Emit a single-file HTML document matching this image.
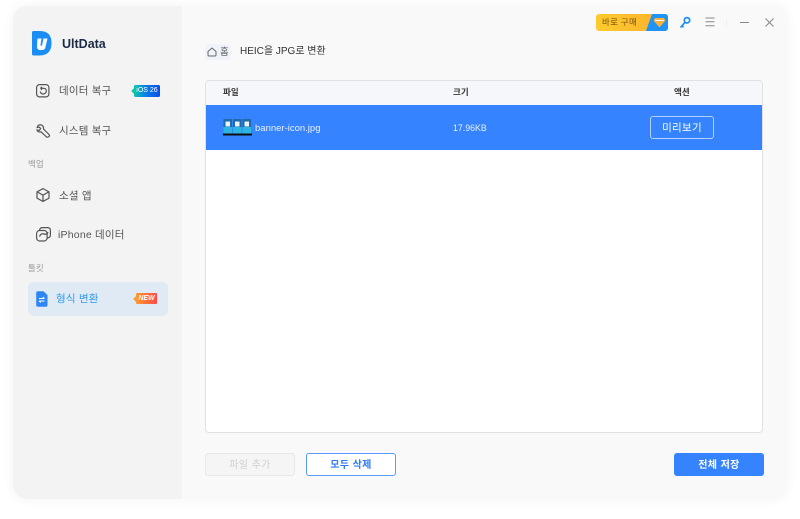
<!DOCTYPE html>
<html lang="ko"><head><meta charset="utf-8"><style>
html,body{margin:0;padding:0;width:800px;height:519px;overflow:hidden;background:#fff}
*{box-sizing:border-box}
body{font-family:"Liberation Sans","Noto Sans CJK KR",sans-serif;position:relative}
#w{position:absolute;left:0;top:0;width:800px;height:519px;filter:blur(.3px)}
.a{position:absolute;white-space:nowrap;line-height:1}
svg{position:absolute;overflow:visible}
</style></head><body><div id="w">
<div class="a" style="left:13px;top:6px;width:774px;height:493px;border-radius:14px;background:#f9f9f9;box-shadow:0 0 12px rgba(0,0,0,.05);overflow:hidden">
<div class="a" style="left:0;top:0;width:169px;height:493px;background:#f3f3f3"></div>
</div>

<!-- logo -->
<svg style="left:32px;top:31px" width="20" height="25" viewBox="0 0 20 25"><path d="M0 1.500Q0 0 1.500 0H8Q19.500 0 19.500 12T8 24.500H1.500Q0 24.500 0 23Z" fill="#1b8ef5"/><path d="M5.500 7.500H9.500L8.500 14Q8.500 15.500 10 14.500L11.500 7.500H15.500L13.500 16Q13 19 10 19H8Q4.800 19 5 15Z" fill="#fff"/></svg>
<div class="a" style="left:62px;top:38px;font-size:12.500px;font-weight:700;color:#1c2b45">UltData</div>

<!-- nav -->
<svg style="left:36px;top:84px" width="14" height="14" viewBox="0 0 14 14" fill="none" stroke="#555" stroke-width="1.200"><rect x=".6" y=".6" width="12.300" height="12.300" rx="3"/><path d="M4.500 4.300H8Q10.300 4.500 10.300 7T7.500 10Q4.700 10 4.300 7.500M4.500 4.300L6 2.800M4.500 4.300L6 5.800"/></svg>
<div class="a" style="left:59px;top:86px;font-size:10.500px;color:#555;letter-spacing:.2px">데이터 복구</div>
<div class="a" style="left:134px;top:85px;width:26px;height:12px;background:linear-gradient(90deg,#0cc7a8 0,#0b7de8 45%,#0a4fe8);border-radius:1.500px;color:#fff;font-size:7px;line-height:12px;text-align:center">iOS 26</div>
<div class="a" style="left:132px;top:89px;width:4px;height:4px;background:#0cc7a8;transform:rotate(45deg)"></div>

<svg style="left:36px;top:124px" width="14" height="14" viewBox="0 0 14 14" fill="none" stroke="#555" stroke-width="1.200"><path d="M5 .8Q2 .5 1.200 3.500L3.500 3.200L4.600 4.500L3.600 6.200L1 6Q2 8.500 5 7.800L10.500 13Q12 13.500 13 12.500T13 10.500L7.500 5Q8 2 5 .8Z"/></svg>
<div class="a" style="left:59px;top:126px;font-size:10.500px;color:#555;letter-spacing:.2px">시스템 복구</div>

<div class="a" style="left:28px;top:160px;font-size:8.500px;color:#9a9a9a">백업</div>

<svg style="left:36px;top:188px" width="14" height="14" viewBox="0 0 14 14" fill="none" stroke="#555" stroke-width="1.200"><path d="M7 .6L13 3.800V10.200L7 13.400L1 10.200V3.800ZM1.200 3.900L7 7.200L12.800 3.900M7 7.200V13.200"/></svg>
<div class="a" style="left:59px;top:191px;font-size:10.500px;color:#555;letter-spacing:.2px">소셜 앱</div>

<svg style="left:36px;top:227px" width="15" height="15" viewBox="0 0 15 15" fill="none" stroke="#555" stroke-width="1.200"><rect x=".6" y="3.500" width="10.500" height="10.500" rx="3"/><path d="M3.500 3Q4 .6 6.500 .6H11.500Q14.400 .6 14.400 3.500V8Q14.400 10.500 11.500 11"/><path d="M3.500 9.500Q5 6 8 7T12 5"/></svg>
<div class="a" style="left:58px;top:230px;font-size:10.500px;color:#555;letter-spacing:.2px">iPhone 데이터</div>

<div class="a" style="left:28px;top:264px;font-size:8.500px;color:#9a9a9a">툴킷</div>

<div class="a" style="left:28px;top:282px;width:140px;height:34px;background:#dfeaf4;border-radius:6px"></div>
<svg style="left:36px;top:291px" width="12" height="16" viewBox="0 0 12 16"><path d="M2 .2H7.500L11.500 4V14Q11.500 15.800 9.700 15.800H2Q.2 15.800.2 14V2Q.2 .2 2 .2Z" fill="#2e86f5"/><path d="M3 7.500H8.500M6.800 6L8.500 7.500M3 10H8.500M3 10L4.800 11.500" stroke="#fff" stroke-width="1" fill="none"/></svg>
<div class="a" style="left:56px;top:294px;font-size:10.500px;color:#2e9bf0;letter-spacing:.2px">형식 변환</div>
<div class="a" style="left:136px;top:293px;width:21px;height:11px;background:linear-gradient(90deg,#ff9a2e,#ff4a4a);border-radius:1px;color:#fff;font-size:7px;font-weight:700;font-style:italic;line-height:11px;text-align:center">NEW</div>
<div class="a" style="left:134px;top:297px;width:4px;height:4px;background:#ff9a2e;transform:rotate(45deg)"></div>

<!-- top bar -->
<div class="a" style="left:596px;top:14px;width:72px;height:17px;border-radius:3px;background:linear-gradient(90deg,#ffcb2e,#fdb02f);overflow:hidden">
<div class="a" style="left:6px;top:4px;font-size:8.500px;color:#7a5510;letter-spacing:.3px">바로 구매</div>
<div class="a" style="left:53px;top:0;width:24px;height:17px;background:#1f94f5;transform:skewX(-20deg)"></div>
</div>
<svg style="left:653px;top:17px" width="13" height="11" viewBox="0 0 13 11"><path d="M2 1H11L12.500 3.500L6.500 10.500L.5 3.500Z" fill="#f7b13c"/><path d="M2 3.500H11" stroke="#fff" stroke-width="1"/></svg>

<svg style="left:679px;top:16px" width="12" height="13" viewBox="0 0 12 13" fill="none" stroke="#1b8ef5" stroke-width="1.700"><circle cx="8" cy="4.300" r="2.700"/><path d="M6 6.300L1.500 11.500M3 9.800L4.500 11.200"/></svg>
<svg style="left:705px;top:17px" width="10" height="10" viewBox="0 0 10 10" stroke="#888" stroke-width="1"><path d="M.5 1H9.500M.5 4.800H9.500M.5 8.800H9.500"/></svg>
<div class="a" style="left:726px;top:19px;width:1px;height:8px;background:#eee"></div>
<div class="a" style="left:740px;top:22px;width:9px;height:1px;background:#888"></div>
<svg style="left:765px;top:18px" width="9" height="9" viewBox="0 0 9 9" stroke="#888" stroke-width="1"><path d="M.5 .5L8.500 8.500M8.500 .5L.5 8.500"/></svg>

<!-- breadcrumb -->
<div class="a" style="left:205px;top:44px;width:26px;height:16px;background:#f0f4fa;border-radius:3px"></div>
<svg style="left:207px;top:47px" width="10" height="10" viewBox="0 0 10 10" fill="none" stroke="#666" stroke-width="1"><path d="M1 4.500L5 1L9 4.500V8Q9 9 8 9H2Q1 9 1 8Z"/></svg>
<div class="a" style="left:220px;top:48px;font-size:9.500px;color:#555">홈</div>
<div class="a" style="left:240px;top:47px;font-size:10px;color:#333">HEIC을 JPG로 변환</div>

<!-- table -->
<div class="a" style="left:205px;top:80px;width:558px;height:353px;background:#fff;border:1px solid #dfe1e4;border-radius:4px;overflow:hidden">
<div class="a" style="left:0;top:0;width:556px;height:24px;background:#f6f7fa"></div>
<div class="a" style="left:0;top:24px;width:556px;height:45px;background:#3583ff"></div>
</div>
<div class="a" style="left:223px;top:88px;font-size:8.500px;font-weight:700;color:#333">파일</div>
<div class="a" style="left:453px;top:88px;font-size:8.500px;font-weight:700;color:#333">크기</div>
<div class="a" style="left:674px;top:88px;font-size:8.500px;font-weight:700;color:#333">액션</div>

<svg style="left:223px;top:119px" width="29" height="17" viewBox="0 0 29 17"><rect width="29" height="17" fill="#3583ff"/><rect x="0" y="14.500" width="29" height="2" fill="#111"/>
<rect x=".5" y="0" width="8.500" height="14.500" fill="#2bb5e0"/><rect x=".5" y="0" width="8.500" height="8" fill="#1f6aa8"/><rect x="2.500" y="2.500" width="4.500" height="5" fill="#e8f4ff"/>
<rect x="10" y="0" width="8.500" height="14.500" fill="#2bb5e0"/><rect x="10" y="0" width="8.500" height="8" fill="#1f6aa8"/><rect x="12" y="2.500" width="4.500" height="5" fill="#e8f4ff"/>
<rect x="19.500" y="0" width="8.500" height="14.500" fill="#2bb5e0"/><rect x="19.500" y="0" width="8.500" height="8" fill="#1f6aa8"/><rect x="21.500" y="2.500" width="4.500" height="5" fill="#e8f4ff"/></svg>
<div class="a" style="left:255px;top:124px;font-size:9.500px;color:#e6f0ff">banner-icon.jpg</div>
<div class="a" style="left:453px;top:124px;font-size:8.800px;color:#e6f0ff">17.96KB</div>
<div class="a" style="left:650px;top:116px;width:64px;height:23px;border:1px solid #b5d2ff;border-radius:3px;color:#fff;font-size:10.500px;line-height:22px;text-align:center;letter-spacing:.3px">미리보기</div>

<!-- buttons -->
<div class="a" style="left:205px;top:453px;width:90px;height:23px;background:#f5f5f5;border:1px solid #e8e8e8;border-radius:3px;color:#cfcfcf;font-size:10px;line-height:23px;text-align:center;letter-spacing:.4px">파일 추가</div>
<div class="a" style="left:306px;top:453px;width:90px;height:23px;background:#fff;border:1px solid #5b9bfb;border-radius:3px;color:#2f7cf5;font-size:10px;font-weight:700;line-height:23px;text-align:center;letter-spacing:.4px">모두 삭제</div>
<div class="a" style="left:674px;top:453px;width:90px;height:23px;background:#3583ff;border-radius:3px;color:#fff;font-size:10px;font-weight:700;line-height:25px;text-align:center;letter-spacing:.4px">전체 저장</div>
</div></body></html>
